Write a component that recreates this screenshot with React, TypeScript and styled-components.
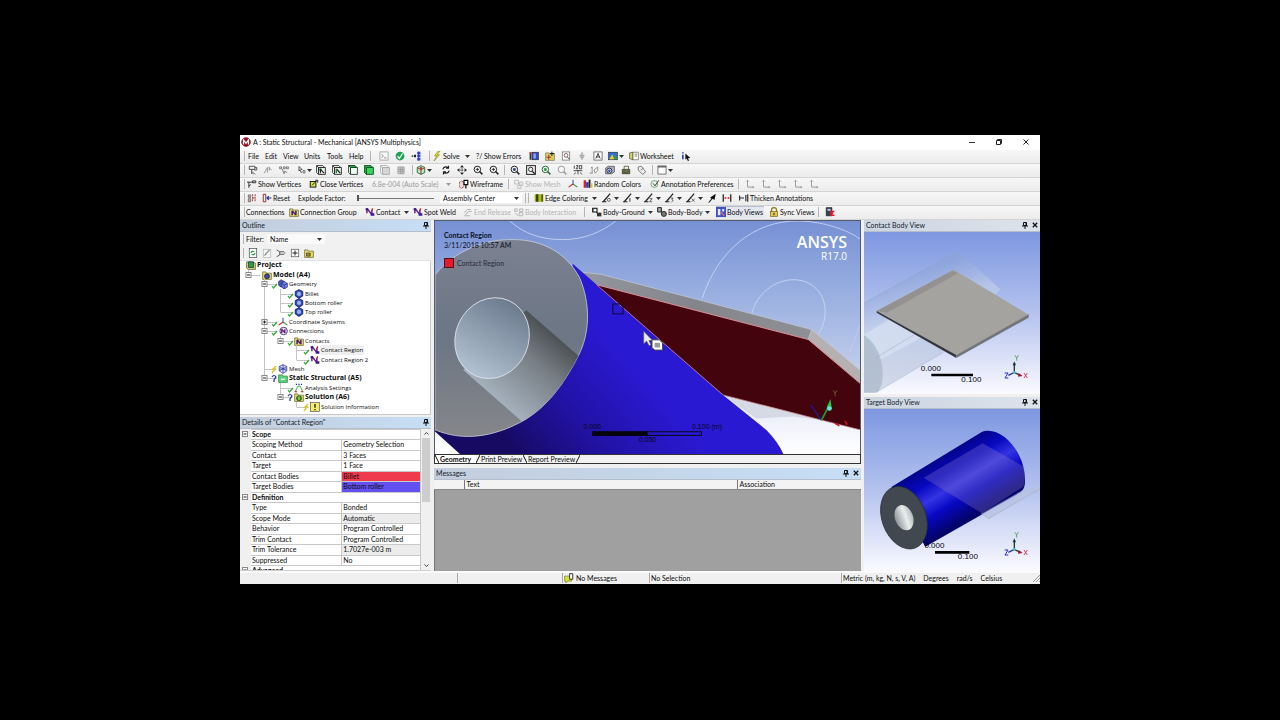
import React from "react";
import styled, { createGlobalStyle, css } from "styled-components";

const uiFont = `Lato, "Open Sans", sans-serif`;
const treeFont = `"Open Sans", "Noto Sans", sans-serif`;
const plainFont = `"Liberation Sans", Arial, sans-serif`;

const GlobalStyle = createGlobalStyle`
  * { box-sizing: border-box; }
  body { margin: 0; background: #000; }
  button, input, select, table { font: inherit; color: inherit; }
`;

const Page = styled.div`
  min-height: 100vh;
  padding: 0 18.75% 2px;
  display: flex;
  flex-direction: column;
  justify-content: center;
  background: #000;
`;

const AppWindow = styled.main`
  display: flex;
  flex-direction: column;
  background: #f0f0f0;
  color: #0c0c0c;
  font: 7px/10px ${uiFont};
  white-space: nowrap;
  cursor: default;
`;

const TitleBar = styled.header`
  display: flex;
  align-items: center;
  height: 15px;
  padding: 0 4px 1px 1px;
  gap: 2px;
  background: #fff;
`;

const Title = styled.h1`
  flex: 1;
  min-width: 0;
  overflow: hidden;
  margin: 0;
  font-size: 7px;
  font-weight: 400;
`;

const WindowButtons = styled.div`
  display: flex;
  gap: 7px;
`;

const WindowButton = styled.button`
  display: grid;
  place-items: center;
  width: 20px;
  height: 12px;
  padding: 0;
  border: 0;
  background: none;
`;

const ToolbarRow = styled.div`
  display: flex;
  align-items: center;
  height: 14px;
  padding-left: 4px;
  overflow: hidden;
  background: linear-gradient(#f7f7f7, #ececec);
  border-bottom: 1px solid #d4d4d4;
`;

const Grip = styled.span<{ $w: number }>`
  flex: none;
  width: ${(p) => p.$w}px;
  height: 10px;
  border-left: 1px solid #b4b4b4;
`;

const Space = styled.span<{ $w: number }>`
  flex: none;
  width: ${(p) => p.$w}px;
`;

const ToolButton = styled.button<{ $w: number; $pressed?: boolean }>`
  flex: none;
  display: flex;
  align-items: center;
  gap: 1px;
  width: ${(p) => p.$w}px;
  height: 12px;
  padding: 0;
  border: 0;
  background: none;
  text-align: left;
  line-height: 10px;
  &:disabled { color: #b5b5b5; }
  ${(p) => p.$pressed && css`
    background: #e2e6ee;
    box-shadow: inset 1px 1px 0 #b9bec8;
  `}
`;

const Caret = styled.svg`
  flex: none;
  width: 5px;
  height: 3px;
  margin: 0 1px 0 auto;
`;

const FieldLabel = styled.label<{ $w: number }>`
  flex: none;
  width: ${(p) => p.$w}px;
`;

const SelectBox = styled.span<{ $w: number; $tone?: string }>`
  flex: none;
  display: grid;
  align-items: center;
  width: ${(p) => p.$w}px;
  height: 10px;
  background: ${(p) => p.$tone ?? "transparent"};
  & > * { grid-area: 1 / 1; }
  & > svg { margin-right: 3px; pointer-events: none; }
  select {
    width: 100%;
    height: 10px;
    padding: 0 10px 0 3px;
    border: 0;
    background: none;
    appearance: none;
    line-height: 10px;
    opacity: 1;
  }
  select:disabled { color: #9a9a9a; }
`;

const Slider = styled.input<{ $w: number }>`
  flex: none;
  width: ${(p) => p.$w}px;
  height: 10px;
  margin: 0;
  appearance: none;
  background: linear-gradient(#777, #777) center / 100% 1px no-repeat;
  &::-webkit-slider-thumb {
    appearance: none;
    width: 2px;
    height: 6px;
    background: #555;
  }
`;

const Workspace = styled.div`
  display: grid;
  grid-template-columns: 191px minmax(0, 1fr) 176px;
  gap: 3px;
`;

const Column = styled.div<{ $gap: number }>`
  display: flex;
  flex-direction: column;
  gap: ${(p) => p.$gap}px;
  min-width: 0;
`;

const Panel = styled.section<{ $grow?: boolean }>`
  display: flex;
  flex-direction: column;
  min-width: 0;
  flex: ${(p) => (p.$grow ? "1 1 0" : "none")};
`;

const PanelHeader = styled.header<{ $muted?: boolean }>`
  display: flex;
  align-items: center;
  gap: 4px;
  height: 12px;
  padding: 0 2px;
  background: ${(p) =>
    p.$muted
      ? "linear-gradient(90deg, #ccd4e0, #dde3ec)"
      : "linear-gradient(90deg, #c3cddc, #c6def6)"};
  border-bottom: 1px solid #b3bdcb;
  color: #141c2c;
`;

const PanelTitle = styled.h2`
  flex: 1;
  margin: 0;
  font-size: 7px;
  font-weight: 400;
`;

const IconButton = styled.button`
  display: flex;
  padding: 0;
  border: 0;
  background: none;
`;

const FilterRow = styled.div`
  display: flex;
  align-items: center;
  height: 15px;
  padding-left: 3px;
  background: #f1f1f1;
`;

const TreeTools = styled.div`
  display: flex;
  align-items: center;
  height: 14px;
  padding-left: 3px;
  background: #f1f1f1;
  border-bottom: 1px solid #e2e2e2;
`;

const Tree = styled.ul`
  display: flex;
  flex-direction: column;
  height: 154px;
  margin: 0;
  padding: 0 0 2px 1px;
  list-style: none;
  background: #fff;
  border: solid #c8c8c8;
  border-width: 0 1px 1px 0;
  font-family: ${treeFont};
`;

const TreeItem = styled.li<{ $bold?: boolean; $selected?: boolean }>`
  flex: 1 1 0;
  min-height: 0;
  display: flex;
  align-items: center;
  font-size: ${(p) => (p.$bold ? 7 : 6)}px;
  font-weight: ${(p) => (p.$bold ? 700 : 400)};
  & > svg { flex: none; }
  & > span {
    padding: 0 1px;
    background: ${(p) => (p.$selected ? "#efefef" : "none")};
  }
`;

const DetailsBody = styled.div`
  display: flex;
  height: 142px;
  overflow: hidden;
  background: #fff;
  border-bottom: 1px solid #d0d0d0;
`;

const DetailsTable = styled.table`
  flex: 1;
  height: 148px;
  border-collapse: collapse;
  table-layout: fixed;
  font-size: 7px;
  line-height: 9px;
  td, th { padding: 0 1px; border: 1px solid #c9c9c9; text-align: left; font-weight: 400; overflow: hidden; }
  td:first-child { border-color: #f0f0f0; background: #f0f0f0; }
  td:first-child svg { display: block; }
`;

const GroupName = styled.th`
  && { font-weight: 700; }
`;

const Value = styled.td<{ $bg?: string }>`
  background: ${(p) => p.$bg ?? "#fff"};
`;

const Scrollbar = styled.div`
  flex: none;
  display: flex;
  flex-direction: column;
  align-items: center;
  justify-content: space-between;
  width: 10px;
  padding: 2px 0;
  background: #f0f0f0;
  i { width: 8px; height: 64px; margin: 3px 0 auto; background: #cdcdcd; }
`;

const Viewport = styled.div`
  position: relative;
  height: 234px;
  border: 1px solid #555b6b;
  border-bottom: 0;
  overflow: hidden;
  & > svg { display: block; width: 100%; height: 100%; }
`;

const SmallViewport = styled(Viewport)`
  height: 162px;
  border: 0;
`;

const Caption = styled.div`
  position: absolute;
  left: 9px;
  top: 9px;
  display: flex;
  flex-direction: column;
  color: #0c1024;
  b { font-weight: 700; }
`;

const Legend = styled.span`
  display: flex;
  align-items: center;
  gap: 3px;
  margin-top: 8px;
  color: #2a2c3c;
  i { width: 10px; height: 10px; background: #e21a2c; border: 1px solid #551018; }
`;

const Brand = styled.div`
  position: absolute;
  right: 13px;
  top: 12px;
  display: flex;
  flex-direction: column;
  align-items: flex-end;
  color: #fff;
  font: 10px/11px ${treeFont};
  b { font-size: 16px; line-height: 18px; font-weight: 600; }
`;

const ScaleMark = styled.span<{ $x: number; $y: number; $size?: number }>`
  position: absolute;
  left: ${(p) => p.$x}%;
  top: ${(p) => p.$y}px;
  font: ${(p) => p.$size ?? 7}px/8px ${plainFont};
  color: #05050f;
  transform: translateX(-50%);
`;

const ViewTabs = styled.div`
  display: flex;
  height: 10px;
  background: #f2f2f2;
  border: 1px solid #333;
`;

const ViewTab = styled.button<{ $active?: boolean; $w: number }>`
  width: ${(p) => p.$w}px;
  display: flex;
  align-items: center;
  gap: 1px;
  height: 8px;
  padding: 0;
  border: 0;
  background: ${(p) => (p.$active ? "#fff" : "none")};
  font-weight: ${(p) => (p.$active ? 700 : 400)};
  line-height: 8px;
  svg { flex: none; }
`;

const MessageTable = styled.table`
  width: 100%;
  border-collapse: collapse;
  table-layout: fixed;
  background: #f3f3f3;
  th {
    height: 10px;
    padding: 0 2px;
    border-right: 1px solid #777;
    border-bottom: 1px solid #888;
    text-align: left;
    font-weight: 400;
    line-height: 9px;
  }
  th:last-child { border-right: 0; }
`;

const MessageArea = styled.div`
  flex: 1;
  background: #a0a0a0;
  border-left: 1px solid #777;
`;

const StatusBar = styled.footer`
  display: grid;
  grid-template-columns: 217px 105px 87px minmax(0, 1fr) 199px;
  align-items: center;
  height: 13px;
  border-top: 2px solid #fafafa;
`;

const StatusCell = styled.span<{ $gap?: number }>`
  display: flex;
  align-items: center;
  gap: ${(p) => p.$gap ?? 2}px;
  height: 10px;
  padding-left: 1px;
  border-left: 1px solid #aaa;
  &:first-child { border-left: 0; }
  svg:last-child { margin-left: auto; }
`;

/* ---------- icons, all on a 16 x 16 grid ---------- */

const cubes = (
  <>
    <path d="M1 4l4-3 5 3v6l-5 3-4-3z" fill="#4356c4" stroke="#161c66" />
    <path d="M6 7l4-3 5 3v6l-5 3-4-3z" fill="#6f86ea" stroke="#161c66" />
    <path d="M6 7l4 3 5-3M10 10v6" stroke="#161c66" fill="none" />
  </>
);
const contactPair = (
  <>
    <path d="M3 2v8M3 2l7 9M11 4v8" stroke="#6b1f8a" strokeWidth="2.4" fill="none" />
    <path d="M1 2h4v3H1zM9 10h6v4H9z" fill="#3a1a8c" />
    <path d="M11 2h2v3h-2z" fill="#c22" />
  </>
);
const selCube = (fill: string, stroke = "#222") => (
  <>
    <path d="M1 1h10l3 3H4v11l-3-3z" fill="#fff" stroke={stroke} strokeWidth="1.4" />
    <path d="M4 4h11v11H4zM1 1l3 3" fill={fill} stroke={stroke} strokeWidth="1.4" />
  </>
);
const magnifier = (extra: React.ReactNode, stroke = "#222") => (
  <>
    <circle cx="7" cy="7" r="5.2" fill="#f4f7fb" stroke={stroke} strokeWidth="1.6" />
    <path d="M10.5 10.5L15 15" stroke={stroke} strokeWidth="2.4" />
    {extra}
  </>
);
const coordinate = (
  <path d="M4 2v11h10M2 4l2-2 2 2M12 11l2 2-2 2" fill="none" stroke="#8c8c8c" strokeWidth="1.3" />
);
const edge = (n: number) => (
  <>
    <path d="M2 14L13 1" stroke="#222" strokeWidth="2" />
    <path d="M0 14h7" stroke="#222" strokeWidth="1.6" />
    {n === 0 && <circle cx="11" cy="11" r="2.4" fill="none" stroke="#222" />}
    {n === 1 && <path d="M11 8v6" stroke="#222" strokeWidth="1.4" />}
    {n === 2 && <path d="M9 9h4l-4 5h4" fill="none" stroke="#222" />}
    {n === 3 && <path d="M9 8h4l-2 3 2 1-3 3" fill="none" stroke="#222" />}
    {n === 4 && <path d="M9 9l5 5M14 9l-5 5" stroke="#222" />}
  </>
);
const folder = (
  <path d="M1 3h5l1 2h8v10H1z" fill="#e6dc6a" stroke="#55501a" />
);

const icons: Record<string, React.ReactNode> = {
  app: (<><circle cx="8" cy="8" r="7" fill="#9c1428" stroke="#500" /><path d="M4 12V5l4 5 4-5v7" fill="none" stroke="#fff" strokeWidth="2" /></>),
  prompt: (<><rect x="1.5" y="1.5" width="13" height="13" fill="#f8f8f8" stroke="#888" /><path d="M4 5l3 3-3 3M8 11h4" fill="none" stroke="#555" /></>),
  ok: (<><circle cx="8" cy="8" r="7" fill="#1fa352" /><path d="M4 8l3 4 5-8" fill="none" stroke="#fff" strokeWidth="2" /></>),
  branch: (<><path d="M1 8h7" stroke="#222" strokeWidth="2" strokeDasharray="2.4 1" /><path d="M12 1v14" stroke="#2b3fd0" strokeWidth="1.4" /><path d="M5 6h3v4H5z" fill="#222" /><path d="M10 1h5v4h-5zM10 6h5v4h-5zM10 11h5v4h-5z" fill="#2b3fd0" /></>),
  solve: (<path d="M10 0L4 8h4l-5 8 9-10H8l5-6z" fill="#f4ec1a" stroke="#7d7a10" />),
  newBlue: (<><rect x="5" y="2" width="10" height="12" fill="#2c49c8" stroke="#223" /><path d="M7 4h4v8H7z" fill="#8fa4f0" /><path d="M1 2h3v12H1z" fill="#333" /><path d="M1 2h3v3H1z" fill="#c33" /></>),
  spark: (<><path d="M1 3h6l1 2h7v10H1z" fill="#dcd060" stroke="#665" /><path d="M6 6v8M2 10h8" stroke="#a33" strokeWidth="1.8" /><path d="M11 1v7M8 4h7" stroke="#222" strokeWidth="1.6" /></>),
  preview: (<><rect x="2" y="1.500" width="12" height="13" fill="#fff" stroke="#555" /><circle cx="8" cy="7" r="3" fill="none" stroke="#8a5b5b" strokeWidth="1.500" /><path d="M10 9l3 4" stroke="#555" strokeWidth="1.500" /></>),
  pinGray: (<path d="M8 2v12M4 7h8M5 10h6" stroke="#aaa" strokeWidth="2.4" />),
  annotate: (<><rect x="1.500" y="1.500" width="13" height="13" fill="#fff" stroke="#333" /><path d="M4.500 12L8 4l3.500 8M6 9.500h4" fill="none" stroke="#222" strokeWidth="1.400" /></>),
  chart: (<><rect x="1" y="2" width="14" height="12" fill="#2c6fd0" stroke="#223" /><path d="M2 13L7 5l3 8z" fill="#f0d020" /><path d="M9 13l3-8 3 8z" fill="#28a050" /></>),
  sheet: (<><path d="M6 2h9v12H6z" fill="#fff" stroke="#555" /><path d="M1 3l5-1v12l-5-2zM9 5h4M9 8h4" fill="#d8dc50" stroke="#333" /></>),
  info: (<><path d="M3 2v2M3 6v7" stroke="#1b2fae" strokeWidth="2.400" /><path d="M7 4l8 7-4 .5L13 15l-2 1-2-4-2 2z" fill="#111" /></>),
  pickFlag: (<><path d="M2 2h9v5H2zM11 4h3v4h-4" fill="none" stroke="#555" strokeWidth="1.600" /><path d="M6 7v7l2-2 3 3" fill="none" stroke="#444" strokeWidth="1.600" /></>),
  pickPoint: (<path d="M2 13L7 4v8M9 4l5 4M10 3v6" fill="none" stroke="#888" strokeWidth="1.300" />),
  pickRow: (<path d="M1 3h3v3H1zM7 3h3v3H7zM12 3h3v3h-3zM5 6l3 8 1-4 4 2" fill="none" stroke="#666" strokeWidth="1.300" />),
  arrowMode: (<><path d="M2 1v9l2-2 3 6M2 1l6 6H5" fill="none" stroke="#222" strokeWidth="1.500" /><path d="M10 9h4v5h-4z" fill="#ddd" stroke="#222" /></>),
  cubeVertex: (<>{selCube("#eef0ee")}<circle cx="7" cy="7" r="2" fill="#1a8a2c" /><path d="M7 7l6 6M7 7v6" stroke="#222" strokeWidth="1.800" /></>),
  cubeEdge: (<>{selCube("#eef0ee")}<path d="M7 6v7" stroke="#1a8a2c" strokeWidth="2.400" /><path d="M8 7l5 6" stroke="#222" strokeWidth="2" /></>),
  cubeFace: (<>{selCube("#f4fbf4", "#14331c")}<path d="M1 1h10l3 3H4z" fill="#2bb04a" stroke="#14331c" /></>),
  cubeBody: (<>{selCube("#3ad45e", "#0e4a1e")}<path d="M1 1h10l3 3H4v11l-3-3z" fill="#1fb344" stroke="#0e4a1e" /></>),
  cubeGray: selCube("#d6d6d6", "#a8a8a8"),
  gridGray: (<path d="M3 3h10v11H3zM3 7h10M3 10h10M7 3v11M10 3v11" fill="#ccc" stroke="#8f8f8f" />),
  wcs: (<><path d="M8 1l6 3v8l-6 3-6-3V4z" fill="#bfe6c6" stroke="#2a7a3c" strokeWidth="1.600" /><path d="M8 8l6-4M8 8v7M8 8L2 4" stroke="#922" strokeWidth="1.400" /><circle cx="8" cy="5" r="2" fill="#c33" /></>),
  rotate: (<path d="M3 7a5 5 0 0 1 9-2M13 9a5 5 0 0 1-9 2M12 1v4H8M4 15v-4h4" fill="none" stroke="#222" strokeWidth="1.900" />),
  pan: (<><path d="M8 5v6M5 8h6" stroke="#222" strokeWidth="1.400" strokeDasharray="2 1" /><path d="M8 0l3 4H5zM8 16l3-4H5zM0 8l4-3v6zM16 8l-4-3v6z" fill="#222" /></>),
  zoom: magnifier(<path d="M7 4.500v5M4.500 7h5" stroke="#222" strokeWidth="1.400" />),
  zoomFit: magnifier(<circle cx="7" cy="7" r="2.500" fill="#3c4f8c" />),
  zoomBox: (<><rect x="1" y="1" width="14" height="14" fill="none" stroke="#222" strokeWidth="1.600" /><circle cx="7.500" cy="7" r="3.500" fill="none" stroke="#222" strokeWidth="1.500" /><path d="M10 10l4 4" stroke="#222" strokeWidth="2" /></>),
  zoomGreen: magnifier(<circle cx="7" cy="7" r="2.500" fill="#3aa04a" />, "#2b6a34"),
  zoomGray: magnifier(null, "#9a9a9a"),
  iso: (<path d="M2 1v5M5 1h3L5 6h3M10 1h4v5h-4zM1 9h14M8 8v7M4 12l-2 3M12 12l2 3" fill="none" stroke="#333" strokeWidth="1.400" />),
  lookAt: (<path d="M3 5l2-2v10M8 8l6-5v6l-4 4zM1 13h5" fill="none" stroke="#888" strokeWidth="1.400" />),
  cubeBlue: (<><path d="M1 5l4-3h10v9l-4 3H1z" fill="#a9b0c2" stroke="#333" /><circle cx="7" cy="9" r="4" fill="#dfe6f8" stroke="#222" strokeWidth="1.400" /><circle cx="7" cy="9" r="2" fill="#2a48b8" /></>),
  printer: (<><path d="M2 7h12v7H2z" fill="#6d7530" stroke="#222" /><path d="M5 2h7v5H5zM5 10h6v2H5z" fill="#f4f4d8" stroke="#222" /></>),
  tag: (<path d="M2 3l5-1 7 9-5 4L2 8zM6 8l4-3" fill="#eee" stroke="#666" strokeWidth="1.300" />),
  pane: (<><rect x="1.500" y="1.500" width="13" height="13" fill="#fafafa" stroke="#333" /><path d="M1.500 3h13" stroke="#333" strokeWidth="1.600" /></>),
  vertices: (<path d="M3 14V5h7M0 5h3M9 3h5v3H9zM3 11l3-2" fill="none" stroke="#333" strokeWidth="1.600" />),
  closeVertices: (<><rect x="2" y="4" width="9" height="9" fill="#d5e233" stroke="#222" strokeWidth="1.600" /><path d="M5 10l8-8M10 2h4v4" fill="none" stroke="#222" strokeWidth="1.500" /></>),
  wire: (<><path d="M0 6l4-3 4 3v6l-4 3-4-3z" fill="#e7d9d9" stroke="#a22" strokeWidth="1.400" strokeDasharray="2 1" /><path d="M8 2h6v7H8zM11 9v6" fill="#fff" stroke="#111" strokeWidth="2" /></>),
  meshGray: (<path d="M1 2h6v6H1zM9 5h5v5H9zM6 10h5v5H6z" fill="none" stroke="#b5b5b5" strokeWidth="1.300" />),
  triad: (<><path d="M8 8V1" stroke="#3560d0" strokeWidth="1.800" /><path d="M8 8l7 5" stroke="#2a9a3c" strokeWidth="1.800" /><path d="M8 8l-7 5" stroke="#c22" strokeWidth="1.800" /></>),
  random: (<><path d="M1 2h4v12H1z" fill="#d02828" /><path d="M5 5h4v9H5z" fill="#2a3fd0" /><path d="M9 1h3v13H9z" fill="#222" /><path d="M12 7h3v7h-3z" fill="#d8c020" /></>),
  prefs: (<><circle cx="7" cy="8" r="5.500" fill="#eef6ee" stroke="#367a48" /><path d="M5 7l3 4 6-9" fill="none" stroke="#333" strokeWidth="1.500" /></>),
  coordinate,
  explode: (<><path d="M2 3h4v4H2zM2 9h4v5H2z" fill="#c9a0a0" stroke="#555" /><path d="M9 2v12M13 2v12M9 8h4" stroke="#a03a3a" strokeWidth="1.600" strokeDasharray="3 1" /></>),
  reset: (<><path d="M2 2h4v12H2z" fill="#fff" stroke="#922" strokeWidth="1.500" /><path d="M15 8H8M11 5L8 8l3 3" fill="none" stroke="#1b2f9a" strokeWidth="1.900" /></>),
  coloring: (<><path d="M1 2h14v12H1z" fill="#aebd1c" /><path d="M3 2h4v12H3zM12 2h2v12h-2z" fill="#38420c" /></>),
  edge0: edge(0), edge1: edge(1), edge2: edge(2), edge3: edge(3), edge4: edge(4),
  slash: (<path d="M2 15l5-6-2-2 9-6-2 10-3-2-5 6z" fill="#111" />),
  width: (<><path d="M2 2v12M14 2v12" stroke="#222" strokeWidth="2" /><path d="M4 8h3M9 8h3" stroke="#c22" strokeWidth="2.600" /></>),
  thicken: (<path d="M1 4v8M14 2v12M2 8h6M11 3v10" stroke="#223" strokeWidth="1.800" />),
  group: (<>{folder}<path d="M5 6v7M5 6l6 7M11 6v7" stroke="#4a1a7a" strokeWidth="2.400" fill="none" /></>),
  contact: contactPair,
  releaseGray: (<path d="M2 10l5-6h6M4 13l5-6h5M2 14h9" stroke="#b0b0b0" strokeWidth="1.500" fill="none" />),
  interactGray: (<path d="M1 3h4v4H1zM9 3h5v4H9zM2 10l5 4M8 9h6v5H8z" fill="none" stroke="#b0b0b0" strokeWidth="1.400" />),
  ground: (<><path d="M1 2h7v6H1zM5 7l5 4" fill="#888" stroke="#222" strokeWidth="1.800" /><circle cx="5" cy="5" r="2" fill="#fff" /><path d="M8 9h7v6H8z" fill="#333" /></>),
  bodyBody: (<><path d="M1 1h6v7H1z" fill="#aaa" stroke="#222" strokeWidth="1.600" /><path d="M6 6l4 5" stroke="#222" strokeWidth="1.500" /><circle cx="11" cy="11" r="4" fill="#777" stroke="#222" strokeWidth="1.500" /></>),
  views: (<><path d="M0 0h16v16H0z" fill="#3c50c8" /><path d="M3 3h4v10H3zM10 3h3v4h-3z" fill="#e8ecff" /><path d="M8 8l5 6" stroke="#e66" strokeWidth="2" /></>),
  lock: (<><path d="M4 8V5a4 4 0 0 1 8 0v3" fill="none" stroke="#8c7a1a" strokeWidth="2" /><rect x="2.500" y="7" width="11" height="8" fill="#e6c84a" stroke="#6b5a10" /><path d="M8 9v4" stroke="#443" strokeWidth="2" /></>),
  flagRed: (<><path d="M2 1h9v13H2z" fill="#34415c" stroke="#111" /><path d="M4 3h5v3H4z" fill="#cdd3e0" /><path d="M15 7H9v6h6M9 10h4" fill="none" stroke="#e0182c" strokeWidth="2.400" /></>),
  refresh: (<><rect x="2" y="1" width="12" height="14" fill="#fff" stroke="#333" /><path d="M5 8a3 3 0 0 1 5-2M11 8a3 3 0 0 1-5 2" fill="none" stroke="#1a9a3a" strokeWidth="1.900" /></>),
  penGray: (<><rect x="2" y="2" width="12" height="13" fill="#f6f6f6" stroke="#aaa" /><path d="M4 12l8-9" stroke="#999" strokeWidth="2.400" /></>),
  sort: (<path d="M1 3l5 3v5l-5 3M6 6h7M6 10h7M13 8h2" fill="none" stroke="#444" strokeWidth="1.400" />),
  plusBox: (<><rect x="2" y="2" width="12" height="12" fill="#fff" stroke="#444" /><path d="M8 4v8M4 8h8" stroke="#222" strokeWidth="1.600" /></>),
  folderOpen: (<>{folder}<path d="M4 8h6v5H4z" fill="#9c8a20" stroke="#332" /></>),
  project: (<><path d="M1 3h10l4 2v10H4l-3-2z" fill="#e0d868" stroke="#333" /><path d="M4 3h8v9H4z" fill="#2b9a4a" stroke="#123" /></>),
  model: (<>{folder}<circle cx="8" cy="10" r="4" fill="#3a48a8" stroke="#112" /></>),
  geometry: cubes,
  body: (<><path d="M8 1l6 3v7l-6 4-6-4V4z" fill="#2f4cba" stroke="#151f66" strokeWidth="1.400" /><path d="M5 6l3-2 3 2v4l-3 1-3-1z" fill="#9db4f2" /></>),
  connections: (<><circle cx="9" cy="8" r="6" fill="#efe2f4" stroke="#4a2580" strokeWidth="1.400" /><path d="M6 5v6M6 5l5 6M11 5v6" stroke="#5a1a7a" strokeWidth="2" fill="none" /></>),
  mesh: (<path d="M8 1l6 3v7l-6 4-6-4V4zM2 8h12M8 1v14M2 4l12 7M14 4L2 11" fill="#dfe4fa" stroke="#2b3a9a" strokeWidth="1.200" />),
  static: (<><path d="M1 3h6l1 2h7v10H1z" fill="#59d47a" stroke="#1a6a30" /><path d="M5 10h6" stroke="#fff" strokeWidth="1.800" /></>),
  settings: (<><path d="M2 14l4-9h4l4 9" fill="none" stroke="#3a9a3a" strokeWidth="1.400" /><path d="M3 2h2M7 2h2M11 2h2" stroke="#23c" strokeWidth="2" /><path d="M1 14h4M11 14h4" stroke="#a22" strokeWidth="1.600" /></>),
  solution: (<>{folder}<circle cx="8" cy="10" r="4" fill="#2b9a3a" stroke="#122" /><path d="M8 7v6" stroke="#e8e020" strokeWidth="1.600" /></>),
  solInfo: (<><rect x="1" y="1" width="14" height="14" fill="#f3ee66" stroke="#444" /><path d="M8 3v6M8 11v2" stroke="#222" strokeWidth="2.200" /></>),
  bubble: (<><path d="M1 5h11v8H6l-3 3v-3H1z" fill="#d6e23a" stroke="#6b701a" /><path d="M9 1h5v9H9z" fill="#fff" stroke="#222" strokeWidth="1.400" /></>),
};

const Icon = ({ name, size = 10 }: { name: string; size?: number }) => (
  <svg width={size} height={size} viewBox="0 0 16 16" aria-hidden="true">
    {icons[name]}
  </svg>
);

const Down = ({ color = "#333" }: { color?: string }) => (
  <Caret viewBox="0 0 5 3" aria-hidden="true">
    <path d="M0 0h5L2.500 3z" fill={color} />
  </Caret>
);

const Pin = () => (
  <IconButton type="button" aria-label="Auto hide">
    <svg width="6" height="7" viewBox="0 0 6 7">
      <path d="M1.500.5h3v3h-3zM0 4h6M3 4v3" fill="none" stroke="#111" strokeWidth="1" />
      <path d="M3.500.5h1v3h-1z" fill="#111" />
    </svg>
  </IconButton>
);

const Close = () => (
  <IconButton type="button" aria-label="Close panel">
    <svg width="6" height="6" viewBox="0 0 6 6">
      <path d="M.8.8l4.400 4.400M5.200.8L.8 5.200" stroke="#111" strokeWidth="1.300" />
    </svg>
  </IconButton>
);

/* ---------- toolbars ---------- */

type Tool =
  | { kind: "grip" | "space"; w: number }
  | { kind: "tool"; w: number; icon?: string; label?: string; menu?: boolean; off?: boolean; pressed?: boolean };

const grip = (w: number): Tool => ({ kind: "grip", w });
const space = (w: number): Tool => ({ kind: "space", w });
const tool = (w: number, icon?: string, label?: string, rest: object = {}): Tool => ({ kind: "tool", w, icon, label, ...rest });
const menu = { menu: true };

const standardBar: Tool[] = [
  grip(4), tool(17, undefined, "File"), tool(18, undefined, "Edit"), tool(21, undefined, "View"),
  tool(23, undefined, "Units"), tool(22, undefined, "Tools"), tool(21, undefined, "Help"), grip(9),
  tool(16, "prompt"), tool(16, "ok"), tool(18, "branch"), grip(3),
  tool(39, "solve", "Solve", menu), space(5), tool(53, undefined, "?/ Show Errors"),
  tool(16, "newBlue"), tool(16, "spark"), tool(16, "preview"), tool(16, "pinGray", undefined, { off: true }), tool(15, "annotate"),
  tool(17, "chart", undefined, menu), space(4), tool(52, "sheet", "Worksheet"), tool(12, "info"),
];

const graphicsBar: Tool[] = [
  grip(4), tool(15, "pickFlag"), tool(16, "pickPoint"), tool(19, "pickRow"), tool(15, "arrowMode", undefined, menu), space(3),
  tool(16, "cubeVertex"), tool(16, "cubeEdge"), tool(16, "cubeFace"), tool(16, "cubeBody"),
  tool(16, "cubeGray", undefined, { off: true }), tool(16, "gridGray", undefined, { off: true }), grip(4),
  tool(17, "wcs", undefined, menu), space(8), tool(16, "rotate"), tool(16, "pan"), tool(16, "zoom"), tool(15, "zoom"), grip(6),
  tool(16, "zoomFit"), tool(15, "zoomBox"), tool(16, "zoomGreen"), tool(16, "zoomGray"), tool(16, "iso"),
  tool(16, "lookAt"), tool(16, "cubeBlue"), tool(16, "printer"), tool(15, "tag"), grip(5), tool(17, "pane", undefined, menu),
];

const edgeBar: Tool[] = [
  tool(64, "coloring", "Edge Coloring", menu), space(4),
  ...[0, 1, 2, 3, 4].flatMap((n) => [tool(18, `edge${n}`, undefined, menu), space(3)]),
  tool(15, "slash"), tool(17, "width"), tool(77, "thicken", "Thicken Annotations"),
];

const connectionsBar: Tool[] = [
  grip(2), tool(43, undefined, "Connections"), tool(76, "group", "Connection Group"),
  tool(45, "contact", "Contact", menu), space(3), tool(50, "contact", "Spot Weld"),
  tool(51, "releaseGray", "End Release", { off: true }), tool(70, "interactGray", "Body Interaction", { off: true }), grip(8),
  tool(62, "ground", "Body-Ground", menu), space(3), tool(54, "bodyBody", "Body-Body", menu), space(5),
  tool(48, "views", "Body Views", { pressed: true }), space(5), tool(49, "lock", "Sync Views"), grip(7), tool(12, "flagRed"),
];

const Tools = ({ items }: { items: Tool[] }) => (
  <>
    {items.map((t, i) => {
      if (t.kind === "grip") return <Grip key={i} $w={t.w} />;
      if (t.kind === "space") return <Space key={i} $w={t.w} />;
      if (t.kind !== "tool") return null;
      return (
        <ToolButton key={i} type="button" $w={t.w} $pressed={t.pressed} disabled={t.off} aria-label={t.label ?? t.icon}>
          {t.icon && <Icon name={t.icon} />}
          {t.label}
          {t.menu && <Down />}
        </ToolButton>
      );
    })}
  </>
);

/* ---------- outline tree ---------- */

type Node = {
  label: string; icon: string; depth: number;
  box?: "-" | "+"; mark?: "check" | "bolt" | "query"; bold?: boolean; selected?: boolean;
  rails?: number[]; last?: boolean;
};

const nodes: Node[] = [
  { label: "Project", icon: "project", depth: 0, bold: true },
  { label: "Model (A4)", icon: "model", depth: 1, box: "-", bold: true, last: true },
  { label: "Geometry", icon: "geometry", depth: 2, box: "-", mark: "check" },
  { label: "Billet", icon: "body", depth: 3, mark: "check", rails: [2] },
  { label: "Bottom roller", icon: "body", depth: 3, mark: "check", rails: [2] },
  { label: "Top roller", icon: "body", depth: 3, mark: "check", rails: [2], last: true },
  { label: "Coordinate Systems", icon: "triad", depth: 2, box: "+", mark: "check" },
  { label: "Connections", icon: "connections", depth: 2, box: "-", mark: "check" },
  { label: "Contacts", icon: "group", depth: 3, box: "-", mark: "check", rails: [2], last: true },
  { label: "Contact Region", icon: "contact", depth: 4, mark: "check", rails: [2], selected: true },
  { label: "Contact Region 2", icon: "contact", depth: 4, mark: "check", rails: [2], last: true },
  { label: "Mesh", icon: "mesh", depth: 2, mark: "bolt" },
  { label: "Static Structural (A5)", icon: "static", depth: 2, box: "-", mark: "query", bold: true, last: true },
  { label: "Analysis Settings", icon: "settings", depth: 3, mark: "check" },
  { label: "Solution (A6)", icon: "solution", depth: 3, box: "-", mark: "query", bold: true, last: true },
  { label: "Solution Information", icon: "solInfo", depth: 4, mark: "bolt", last: true },
];

const TreeLead = ({ node }: { node: Node }) => {
  const width = 5 + 16 * node.depth;
  const x = 16 * (node.depth - 1) + 7.5;
  return (
    <svg width={width} height="10" viewBox={`0 0 ${width} 10`} fill="none" aria-hidden="true">
      {node.rails?.map((d) => <path key={d} d={`M${16 * (d - 1) + 7.5} 0v10`} stroke="#c4c4c4" />)}
      {node.depth > 0 && <path d={`M${x} 0v${node.last ? 5 : 10}M${x} 5.500h12`} stroke="#c4c4c4" />}
      {node.box && (
        <>
          <rect x={x - 2.5} y="2.500" width="5" height="5" fill="#fff" stroke="#888" />
          <path d={node.box === "+" ? `M${x - 1.5} 5h3M${x} 3.500v3` : `M${x - 1.5} 5h3`} stroke="#222" />
        </>
      )}
      {node.mark === "check" && <path d={`M${width - 6} 7l1.500 2 3.500-4`} stroke="#2fa632" strokeWidth="1.200" />}
      {node.mark === "bolt" && <path d={`M${width - 2} 2l-3 3h2l-3 4`} stroke="#d8c81a" strokeWidth="1.400" />}
      {node.mark === "query" && <path d={`M${width - 6} 4q2-3 4 0l-2 3v2`} stroke="#1b2f9a" strokeWidth="1.200" />}
    </svg>
  );
};

/* ---------- details ---------- */

const details: { group?: string; name?: string; value?: string; bg?: string }[] = [
  { group: "Scope" },
  { name: "Scoping Method", value: "Geometry Selection" },
  { name: "Contact", value: "3 Faces" },
  { name: "Target", value: "1 Face" },
  { name: "Contact Bodies", value: "Billet", bg: "#ee3a4c" },
  { name: "Target Bodies", value: "Bottom roller", bg: "#6250f0" },
  { group: "Definition" },
  { name: "Type", value: "Bonded" },
  { name: "Scope Mode", value: "Automatic", bg: "#ececec" },
  { name: "Behavior", value: "Program Controlled" },
  { name: "Trim Contact", value: "Program Controlled" },
  { name: "Trim Tolerance", value: "1.7027e-003 m", bg: "#ececec" },
  { name: "Suppressed", value: "No" },
  { group: "Advanced" },
];

const Expander = () => (
  <svg width="7" height="7" viewBox="0 0 7 7" aria-hidden="true">
    <rect x=".5" y=".5" width="5" height="5" fill="#fff" stroke="#888" />
    <path d="M1.500 3h3" stroke="#222" />
  </svg>
);

const Chevron = ({ up }: { up?: boolean }) => (
  <svg width="5" height="4" viewBox="0 0 5 4" aria-hidden="true">
    <path d={up ? "M.5 3.500l2-2 2 2" : "M.5.5l2 2 2-2"} fill="none" stroke="#444" />
  </svg>
);

/* ---------- 3D scenes ---------- */

const MainScene = () => (
  <svg viewBox="0 6 1281 702" preserveAspectRatio="none" role="img" aria-label="Rollers and billet">
    <defs>
      <linearGradient id="sky" x1="0" y1="0" x2="0" y2="1">
        <stop offset="0" stopColor="#7690d4" />
        <stop offset=".3" stopColor="#98aee0" />
        <stop offset=".6" stopColor="#bccaea" />
        <stop offset=".85" stopColor="#eff1fa" />
        <stop offset="1" stopColor="#fff" />
      </linearGradient>
      <linearGradient id="blueBody" gradientUnits="userSpaceOnUse" x1="230" y1="690" x2="560" y2="400">
        <stop offset="0" stopColor="#170a62" />
        <stop offset=".5" stopColor="#2213a8" />
        <stop offset="1" stopColor="#2a19d2" />
      </linearGradient>
      <linearGradient id="face" x1="0" y1="0" x2="0" y2="1">
        <stop offset="0" stopColor="#7b8190" />
        <stop offset=".5" stopColor="#6c7684" />
        <stop offset="1" stopColor="#85868a" />
      </linearGradient>
      <linearGradient id="bore" gradientUnits="userSpaceOnUse" x1="370" y1="350" x2="200" y2="550">
        <stop offset="0" stopColor="#4b4f52" />
        <stop offset=".4" stopColor="#777e85" />
        <stop offset="1" stopColor="#a3afbb" />
      </linearGradient>
      <linearGradient id="hole" x1=".5" y1="0" x2=".4" y2="1">
        <stop offset="0" stopColor="#6c7b8e" />
        <stop offset="1" stopColor="#b3c2d2" />
      </linearGradient>
      <linearGradient id="plate" x1="0" y1="0" x2="1" y2="0">
        <stop offset="0" stopColor="#9496a0" />
        <stop offset=".5" stopColor="#83858a" />
        <stop offset="1" stopColor="#8f9096" />
      </linearGradient>
    </defs>
    <rect y="6" width="1281" height="702" fill="url(#sky)" />
    <g fill="none" stroke="#ccd8f4" strokeWidth="2.500">
      <path d="M225 6C270 45 320 62 385 62S500 40 545 6" />
      <path d="M805 240C850 100 960 2 1100 6c70 2 140 25 181 54" />
      <path d="M955 285c15-60 70-104 130-102 60 3 98 50 90 112-4 34-20 54-38 72" />
      <path d="M1250 400l31-80" opacity=".6" />
    </g>
    <path d="M868 530l302 77-90-12-110 6z" fill="#d5dae4" />
    <path d="M440 160l62 7 633 166-10 30-638-165z" fill="url(#plate)" />
    <path d="M1135 333l146 122v40l-156-132z" fill="#b5b1b3" />
    <path d="M487 198l638 165 156 132v140l-111-28-302-77z" fill="#44040d" />
    <path d="M487 198l638 165 156 132" fill="none" stroke="#d98e90" strokeWidth="3" />
    <path d="M868 530l302 77 111 28" fill="none" stroke="#c8878c" strokeWidth="2" />
    <path d="M440 160l62 7 633 166 146 122M1135 333l-10 30" fill="none" stroke="#c9cad2" strokeWidth="2" />
    <path d="M415 135l453 395 130 105q35 35 52 73H75L0 640V400h400z" fill="url(#blueBody)" />
    <path d="M487 198l381 332" stroke="#c07a9a" strokeWidth="2.500" />
    <path d="M0 168C60 95 150 60 235 62c90 0 160 40 200 113 35 80 32 170-3 237-45 90-100 160-170 198-90 48-180 60-262 25z" fill="url(#face)" stroke="#c5cbd8" strokeWidth="2.500" />
    <path d="M275 275l157 137c-45 90-100 160-170 198L85 455z" fill="url(#bore)" />
    <ellipse cx="172" cy="359" rx="110" ry="124" transform="rotate(24 172 359)" fill="url(#hole)" stroke="#dde2ea" strokeWidth="2.500" />
    <path d="M536 256h24l7 12v18h-31z" fill="none" stroke="#0a0a2a" strokeWidth="3" />
    <path d="M629 338v38l9-8 7 14 6-3-6-13h11z" fill="#e8e8ee" stroke="#555" strokeWidth="2" />
    <path d="M654 364h22l10 9v22h-24l-8-8z" fill="#fff" stroke="#444" strokeWidth="3" />
    <path d="M662 373h16v14h-16z" fill="#999" />
    <path d="M1165 606L1132 560" stroke="#1c1c9c" strokeWidth="4" />
    <path d="M1165 606l24-46" stroke="#17a52a" strokeWidth="5" />
    <path d="M1180 568l12-26 4 30z" fill="#22c63a" />
    <circle cx="1189" cy="571" r="7" fill="#6fe0e0" />
    <path d="M1205 615l14 8M1236 608l6 12" stroke="#d01020" strokeWidth="5" />
    <path d="M1200 516l6 9 6-9M1206 525v9" fill="none" stroke="#6b5a30" strokeWidth="3" />
    <path d="M475 641h328v11H475z" fill="none" stroke="#08081c" strokeWidth="3" />
    <path d="M475 640h166v13H475z" fill="#05050c" />
  </svg>
);

const ViewTriad = () => (
  <g fill="none" strokeWidth="4">
    <path d="M457 463v-28" stroke="#1b3a2a" />
    <path d="M452 442l5-12 5 12z" fill="#1b3a2a" />
    <path d="M457 463l18 9" stroke="#333" />
    <path d="M470 465l12 9-14 2z" fill="#a01828" />
    <path d="M457 463l-18 9" stroke="#223a8c" />
    <path d="M428 465h10l-9 15h10" stroke="#2a2fc0" strokeWidth="3" />
    <path d="M486 465l10 15M496 465l-10 15" stroke="#d8405c" strokeWidth="3" />
    <path d="M459 412l5 8 5-8M464 420v8" stroke="#5aa860" strokeWidth="3" />
    <circle cx="457" cy="463" r="4" fill="#49c0c0" />
  </g>
);

const Backdrop = ({ id }: { id: string }) => (
  <>
    <defs>
      <linearGradient id={id} x1="0" y1="0" x2="0" y2="1">
        <stop offset="0" stopColor="#7d97e0" />
        <stop offset=".5" stopColor="#b4c2ee" />
        <stop offset="1" stopColor="#fafaff" />
      </linearGradient>
    </defs>
    <rect x="6" y="42" width="528" height="486" fill={`url(#${id})`} />
  </>
);

const ContactScene = () => (
  <svg viewBox="6 42 528 486" preserveAspectRatio="none" role="img" aria-label="Contact body">
    <Backdrop id="skyContact" />
    <defs>
      <linearGradient id="ghost" gradientUnits="userSpaceOnUse" x1="130" y1="180" x2="220" y2="420">
        <stop offset="0" stopColor="#8ba3d4" stopOpacity=".5" />
        <stop offset=".45" stopColor="#c6d2ea" stopOpacity=".6" />
        <stop offset="1" stopColor="#b2bfd6" stopOpacity=".5" />
      </linearGradient>
    </defs>
    <path d="M6 255L250 120q25-16 45-16l120 110L240 405 40 524H6z" fill="url(#ghost)" />
    <path d="M6 350l90-55 90 60-130 70z" fill="#dbe4f4" opacity=".6" />
    <path d="M6 352c35 20 58 70 56 120 0 25-6 42-18 52H6z" fill="#a7b7c6" opacity=".7" />
    <path d="M6 255L250 120q25-16 45-16M40 420l200-120M45 522l200-120" stroke="#8ea2c4" strokeWidth="2" fill="none" opacity=".6" />
    <path d="M44 279L275 155l225 135-217 122z" fill="#a5a39f" />
    <path d="M44 279L270 158l18 8L75 284z" fill="#8b8a89" opacity=".7" />
    <path d="M44 279l239 132v9L44 284z" fill="#34363c" />
    <path d="M283 411l217-122v10L283 420z" fill="#73757c" />
    <path d="M208 467h125v8H208z" fill="#000" />
    <ViewTriad />
  </svg>
);

const TargetScene = () => (
  <svg viewBox="6 42 528 486" preserveAspectRatio="none" role="img" aria-label="Target body">
    <Backdrop id="skyTarget" />
    <defs>
      <linearGradient id="roller" gradientUnits="userSpaceOnUse" x1="225" y1="192" x2="328" y2="362">
        <stop offset="0" stopColor="#04048a" />
        <stop offset=".25" stopColor="#0808c0" />
        <stop offset=".48" stopColor="#3434e4" />
        <stop offset=".7" stopColor="#0808c4" />
        <stop offset="1" stopColor="#03036a" />
      </linearGradient>
      <linearGradient id="rollerHole" x1="0" y1="0" x2="1" y2="0">
        <stop offset="0" stopColor="#8e9497" />
        <stop offset=".6" stopColor="#e9edee" />
        <stop offset="1" stopColor="#b4babd" />
      </linearGradient>
    </defs>
    <path d="M88 276L358 112c50-24 132 50 131 145 0 20-6 30-18 38L190 455z" fill="url(#roller)" />
    <path d="M185 248l177-103 124 70q6 40-2 60l-124 80z" fill="#8a7ac8" opacity=".32" />
    <path d="M358 356l126-72 50-6v4L380 372z" fill="#b6c0dc" opacity=".6" />
    <path d="M358 356l22 14 154-88" fill="none" stroke="#a9b0c6" strokeWidth="2" />
    <ellipse cx="126" cy="368" rx="66" ry="97" transform="rotate(-20 126 368)" fill="#41484f" stroke="#23282e" strokeWidth="2" />
    <ellipse cx="126" cy="368" rx="27" ry="39" transform="rotate(-20 126 368)" fill="url(#rollerHole)" />
    <path d="M219 468h103v8H219z" fill="#000" />
    <ViewTriad />
  </svg>
);

export default function App() {
  return (
    <Page>
      <GlobalStyle />
      <AppWindow>
        <TitleBar>
          <Icon name="app" />
          <Title>A : Static Structural - Mechanical [ANSYS Multiphysics]</Title>
          <WindowButtons>
            <WindowButton type="button" aria-label="Minimize">
              <svg width="8" height="8" viewBox="0 0 8 8"><path d="M1 4.500h6" stroke="#333" /></svg>
            </WindowButton>
            <WindowButton type="button" aria-label="Restore">
              <svg width="8" height="8" viewBox="0 0 8 8"><path d="M1.500 2.500h4v4h-4zM2.500 2.500v-1h4v4h-1" fill="none" stroke="#222" /></svg>
            </WindowButton>
            <WindowButton type="button" aria-label="Close">
              <svg width="8" height="8" viewBox="0 0 8 8"><path d="M1.500 1.500l5 5M6.500 1.500l-5 5" stroke="#222" /></svg>
            </WindowButton>
          </WindowButtons>
        </TitleBar>

        <ToolbarRow role="toolbar"><Tools items={standardBar} /></ToolbarRow>
        <ToolbarRow role="toolbar"><Tools items={graphicsBar} /></ToolbarRow>
        <ToolbarRow role="toolbar">
          <Tools items={[grip(3), tool(62, "vertices", "Show Vertices"), tool(60, "closeVertices", "Close Vertices")]} />
          <SelectBox $w={85}>
            <select aria-label="Vertex scale" disabled><option>6.8e-004 (Auto Scale)</option></select>
            <Down color="#999" />
          </SelectBox>
          <Space $w={5} />
          <Tools
            items={[
              tool(49, "wire", "Wireframe"), grip(6), tool(54, "meshGray", "Show Mesh", { off: true }), tool(15, "triad"),
              tool(67, "random", "Random Colors"), tool(88, "prefs", "Annotation Preferences"), grip(7),
              ...Array.from({ length: 5 }, () => tool(16, "coordinate")),
            ]}
          />
        </ToolbarRow>
        <ToolbarRow role="toolbar">
          <Tools items={[grip(3), tool(15, "explode"), tool(36, "reset", "Reset")]} />
          <FieldLabel $w={59} htmlFor="explode">Explode Factor:</FieldLabel>
          <Slider $w={77} id="explode" type="range" min="0" max="100" defaultValue="0" />
          <Space $w={6} />
          <SelectBox $w={82} $tone="#fff">
            <select aria-label="Explode center"><option>Assembly Center</option></select>
            <Down />
          </SelectBox>
          <Space $w={3} />
          <Grip $w={3} />
          <Grip $w={6} />
          <Tools items={edgeBar} />
        </ToolbarRow>
        <ToolbarRow role="toolbar"><Tools items={connectionsBar} /></ToolbarRow>

        <Workspace>
          <Column $gap={2}>
            <Panel>
              <PanelHeader><PanelTitle>Outline</PanelTitle><Pin /></PanelHeader>
              <FilterRow>
                <Grip $w={3} />
                <FieldLabel $w={21} htmlFor="filter">Filter:</FieldLabel>
                <SelectBox $w={58} $tone="#fafafa">
                  <select id="filter"><option>Name</option></select>
                  <Down />
                </SelectBox>
              </FilterRow>
              <TreeTools>
                <Grip $w={5} />
                <Tools items={[tool(14, "refresh"), tool(14, "penGray"), tool(14, "sort"), tool(14, "plusBox"), tool(14, "folderOpen")]} />
              </TreeTools>
              <Tree role="tree">
                {nodes.map((n) => (
                  <TreeItem key={n.label} role="treeitem" aria-level={n.depth + 1} $bold={n.bold} $selected={n.selected}>
                    <TreeLead node={n} />
                    <Icon name={n.icon} />
                    <span>{n.label}</span>
                  </TreeItem>
                ))}
              </Tree>
            </Panel>
            <Panel>
              <PanelHeader><PanelTitle>Details of "Contact Region"</PanelTitle><Pin /></PanelHeader>
              <DetailsBody>
                <DetailsTable>
                  <colgroup><col width="9" /><col width="92" /><col width="79" /></colgroup>
                  <tbody>
                    {details.map((d, i) => (
                      <tr key={i}>
                        <td>{d.group && <Expander />}</td>
                        {d.group ? (
                          <GroupName colSpan={2} scope="rowgroup">{d.group}</GroupName>
                        ) : (
                          <>
                            <th scope="row">{d.name}</th>
                            <Value $bg={d.bg}>{d.value}</Value>
                          </>
                        )}
                      </tr>
                    ))}
                  </tbody>
                </DetailsTable>
                <Scrollbar><Chevron up /><i /><Chevron /></Scrollbar>
              </DetailsBody>
            </Panel>
          </Column>

          <Column $gap={4}>
            <Panel>
              <Viewport>
                <MainScene />
                <Caption>
                  <b>Contact Region</b>
                  <span>3/11/2018 10:57 AM</span>
                  <Legend><i />Contact Region</Legend>
                </Caption>
                <Brand><b>ANSYS</b>R17.0</Brand>
                <ScaleMark $x={37} $y={202}>0.000</ScaleMark>
                <ScaleMark $x={64} $y={202}>0.100 (m)</ScaleMark>
                <ScaleMark $x={50} $y={215}>0.050</ScaleMark>
              </Viewport>
              <ViewTabs role="tablist">
                <ViewTab role="tab" $w={41} $active aria-selected="true">
                  <svg width="4" height="8" viewBox="0 0 4 8"><path d="M0 0l4 8" stroke="#111" /></svg>Geometry
                </ViewTab>
                <ViewTab role="tab" $w={47}>
                  <svg width="4" height="8" viewBox="0 0 4 8"><path d="M4 0L0 8" stroke="#111" /></svg>Print Preview
                </ViewTab>
                <ViewTab role="tab" $w={58}>
                  <svg width="4" height="8" viewBox="0 0 4 8"><path d="M0 0l4 8" stroke="#111" /></svg>Report Preview
                  <svg width="4" height="8" viewBox="0 0 4 8"><path d="M4 0L0 8" stroke="#111" /></svg>
                </ViewTab>
              </ViewTabs>
            </Panel>
            <Panel $grow>
              <PanelHeader><PanelTitle>Messages</PanelTitle><Pin /><Close /></PanelHeader>
              <MessageTable>
                <colgroup><col width="30" /><col /><col width="124" /></colgroup>
                <thead><tr><th aria-label="Status" /><th>Text</th><th>Association</th></tr></thead>
              </MessageTable>
              <MessageArea />
            </Panel>
          </Column>

          <Column $gap={3}>
            <Panel>
              <PanelHeader $muted><PanelTitle>Contact Body View</PanelTitle><Pin /><Close /></PanelHeader>
              <SmallViewport>
                <ContactScene />
                <ScaleMark $x={38} $y={133} $size={8}>0.000</ScaleMark>
                <ScaleMark $x={61} $y={144} $size={8}>0.100</ScaleMark>
              </SmallViewport>
            </Panel>
            <Panel>
              <PanelHeader $muted><PanelTitle>Target Body View</PanelTitle><Pin /><Close /></PanelHeader>
              <SmallViewport>
                <TargetScene />
                <ScaleMark $x={40} $y={133} $size={8}>0.000</ScaleMark>
                <ScaleMark $x={59} $y={144} $size={8}>0.100</ScaleMark>
              </SmallViewport>
            </Panel>
          </Column>
        </Workspace>

        <StatusBar>
          <StatusCell />
          <StatusCell />
          <StatusCell><Icon name="bubble" /><span>No Messages</span></StatusCell>
          <StatusCell>No Selection</StatusCell>
          <StatusCell $gap={8}>
            <span>Metric (m, kg, N, s, V, A)</span><span>Degrees</span><span>rad/s</span><span>Celsius</span>
            <svg width="7" height="7" viewBox="0 0 7 7"><path d="M0 7l7-7M3 7l4-4M6 7l1-1" stroke="#999" /></svg>
          </StatusCell>
        </StatusBar>
      </AppWindow>
    </Page>
  );
}
